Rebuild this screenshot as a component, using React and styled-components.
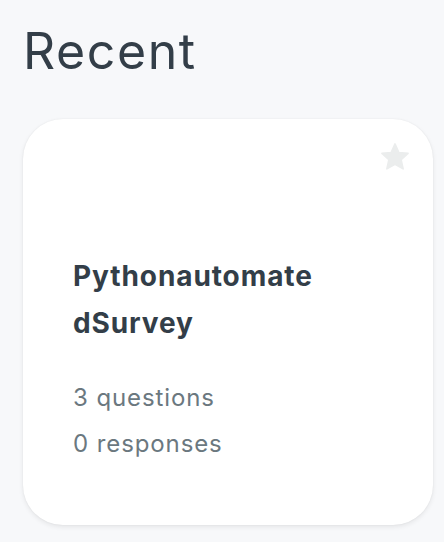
import React from 'react';
import styled, { createGlobalStyle } from 'styled-components';

const GlobalStyle = createGlobalStyle`
    body {
        margin: 0;
        background: #f7f8fa;
        font-family: Inter, "Open Sans", "Liberation Sans", sans-serif;
    }
`;

const recent = [
    { id: 1, title: 'PythonautomatedSurvey', questions: 3, responses: 0, starred: false },
];

export default function App() {
    return (
        <Page>
            <GlobalStyle />
            <Heading>Recent</Heading>
            {recent.map(survey =>
                <Card key={survey.id}>
                    <Star active={survey.starred} aria-label="Favorite">
                        <svg viewBox="0 0 24 24" width="32" height="32">
                            <path
                                d="M12 2.2l2.9 6.4 6.9.7-5.2 4.7 1.5 6.9L12 17.4l-6.1 3.5 1.5-6.9-5.2-4.7 6.9-.7z"
                                fill="currentColor"
                                stroke="currentColor"
                                strokeWidth="1.2"
                                strokeLinejoin="round"
                            />
                        </svg>
                    </Star>
                    <Title>{survey.title}</Title>
                    <Stats>
                        <Stat>{survey.questions} questions</Stat>
                        <Stat>{survey.responses} responses</Stat>
                    </Stats>
                </Card>
            )}
        </Page>
    );
}

const Page = styled.div`
    padding: 21px 0 17px 23px;
`;

const Heading = styled.h1`
    margin: 0 0 38px;
    font-size: 50px;
    line-height: 60px;
    font-weight: 400;
    letter-spacing: 1.6px;
    color: #333e48;
`;

const Card = styled.div`
    position: relative;
    box-sizing: border-box;
    width: 410px;
    height: 406px;
    padding: 134px 50px 0;
    background: #fff;
    border-radius: 40px;
    box-shadow: 0 2px 5px rgba(0, 0, 0, 0.08), 0 0 2px rgba(0, 0, 0, 0.06);
`;

const Star = styled.button`
    position: absolute;
    top: 22px;
    right: 22px;
    padding: 0;
    border: 0;
    background: none;
    display: flex;
    color: ${props => props.active ? '#f9be00' : '#ebeded'};
`;

const Title = styled.div`
    width: 250px;
    font-size: 28px;
    line-height: 47px;
    font-weight: 700;
    letter-spacing: 0.9px;
    color: #333e48;
    word-break: break-all;
`;

const Stats = styled.div`
    margin-top: 28px;
    display: flex;
    flex-direction: column;
`;

const Stat = styled.div`
    font-size: 24px;
    line-height: 46px;
    letter-spacing: 0.9px;
    color: #6b787f;
`;
